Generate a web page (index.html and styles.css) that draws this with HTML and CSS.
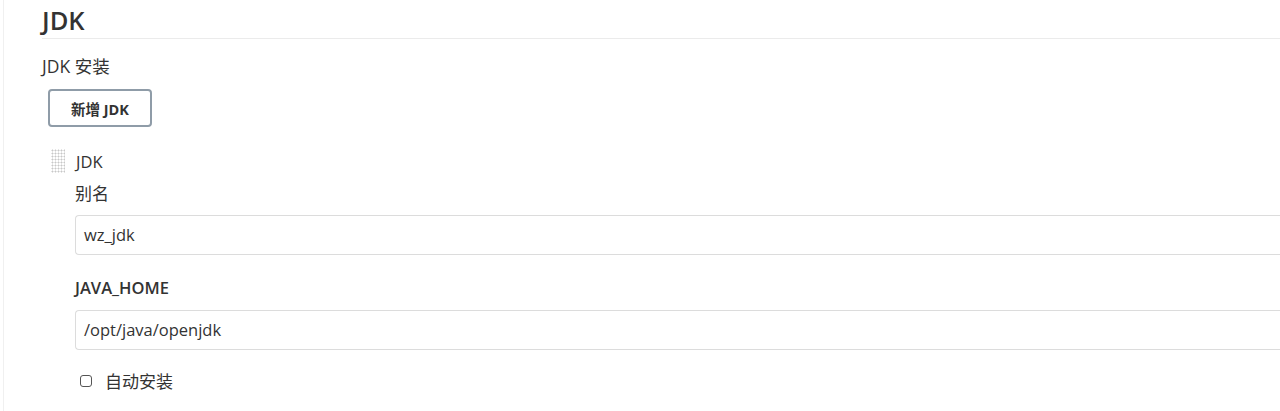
FILE: index.html
```html
<!DOCTYPE html>
<html lang="zh">
<head>
<meta charset="utf-8">
<link rel="stylesheet" href="styles.css">
</head>
<body>
<div class="page">
  <section class="section">
    <h2 class="section-title">JDK</h2>
    <div class="group-label">JDK 安装</div>
    <button class="add-btn" type="button">新增 JDK</button>
    <div class="repeated">
      <div class="repeated-head">
        <span class="handle"></span>
        <span class="repeated-name">JDK</span>
      </div>
      <div class="fields">
        <label class="field-label">别名</label>
        <div class="input">wz_jdk</div>
        <label class="field-label bold">JAVA_HOME</label>
        <div class="input second">/opt/java/openjdk</div>
        <label class="check-row"><span class="checkbox"></span><span class="check-text">自动安装</span></label>
      </div>
    </div>
  </section>
</div>
</body>
</html>
```

FILE: styles.css
```css
html, body {
  margin: 0;
  padding: 0;
  background: #ffffff;
}
body {
  font-family: "Open Sans", "Noto Sans CJK SC", sans-serif;
  color: #333333;
  height: 411px;
  overflow: hidden;
}
.page {
  margin-left: 3px;
  border-left: 1px solid #f0f0f0;
  height: 411px;
  padding-left: 38px;
}
.section-title {
  margin: 0;
  padding-top: 3px;
  font-size: 25.5px;
  font-weight: 600;
  line-height: 34px;
  color: #333;
  border-bottom: 1px solid #ebebeb;
  padding-bottom: 1px;
}
.group-label {
  margin-top: 15px;
  font-size: 17.5px;
  line-height: 24px;
  color: #333;
}
.add-btn {
  margin: 11px 0 0 6px;
  width: 104px;
  height: 38px;
  border: 2px solid #8f9ca8;
  border-radius: 4px;
  background: #fff;
  font-family: "Open Sans", "Noto Sans CJK SC", sans-serif;
  font-weight: 700;
  font-size: 14.5px;
  color: #333;
  display: block;
}
.repeated {
  margin-top: 21px;
}
.repeated-head {
  display: flex;
  align-items: center;
  height: 26px;
}
.handle {
  width: 14px;
  height: 24px;
  margin-left: 9px;
  background-image: radial-gradient(circle, #c8c8c8 0.9px, transparent 1.1px);
  background-size: 3px 3px;
}
.repeated-name {
  margin-left: 11px;
  font-size: 16.5px;
  color: #333;
}
.fields {
  padding-left: 33px;
  display: flex;
  flex-direction: column;
}
.field-label {
  font-size: 17px;
  line-height: 22px;
  margin-top: 9px;
  color: #333;
}
.field-label.bold {
  font-weight: 600;
  font-size: 16.5px;
  margin-top: 22px;
}
.input {
  margin-top: 10px;
  height: 38px;
  border: 1px solid #dcdcdc;
  border-radius: 4px;
  border-right: none;
  border-top-right-radius: 0;
  border-bottom-right-radius: 0;
  font-size: 16.5px;
  line-height: 38px;
  padding-left: 8px;
  color: #333;
}
.input.second {
  margin-top: 11px;
}
.check-row {
  display: flex;
  align-items: center;
  margin-top: 18px;
  padding-left: 5px;
}
.checkbox {
  width: 10px;
  height: 10px;
  border: 1.5px solid #555;
  border-radius: 3px;
}
.check-text {
  margin-left: 13px;
  font-size: 17px;
  color: #333;
}
```
